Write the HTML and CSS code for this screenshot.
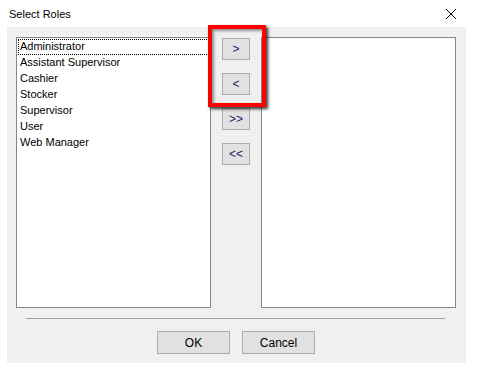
FILE: index.html
```html
<!DOCTYPE html>
<html lang="en">
<head>
    <meta charset="UTF-8">
    <title>Select Roles</title>
    <link rel="stylesheet" href="styles.css">
</head>
<body>
    <div class="window">
        <!-- Title bar -->
        <div class="titlebar">
            <span class="title">Select Roles</span>
            <svg class="close" width="12" height="12" viewBox="0 0 12 12">
                <path d="M1 1 L11 11 M11 1 L1 11" stroke="#000" stroke-width="1" fill="none"/>
            </svg>
        </div>

        <!-- Client area -->
        <div class="client">
            <div class="lists">
                <ul class="listbox">
                    <li class="focused">Administrator</li>
                    <li>Assistant Supervisor</li>
                    <li>Cashier</li>
                    <li>Stocker</li>
                    <li>Supervisor</li>
                    <li>User</li>
                    <li>Web Manager</li>
                </ul>
                <div class="movers">
                    <button class="btn small">&gt;</button>
                    <button class="btn small">&lt;</button>
                    <button class="btn small">&gt;&gt;</button>
                    <button class="btn small">&lt;&lt;</button>
                </div>
                <ul class="listbox"></ul>
            </div>
            <div class="separator"></div>
            <div class="actions">
                <button class="btn wide">OK</button>
                <button class="btn wide">Cancel</button>
            </div>
        </div>

        <!-- Highlight annotation -->
        <div class="highlight"></div>
    </div>
</body>
</html>
```

FILE: styles.css
```css
body {
    margin: 0;
    background-color: #FFFFFF;
    font-family: "Liberation Sans", Arial, sans-serif;
    font-size: 11px;
    color: #000000;
}

.window {
    position: relative;
    width: 477px;
    height: 370px;
}

.titlebar {
    height: 27px;
    display: flex;
    align-items: center;
    justify-content: space-between;
    padding: 0 20px 0 9px;
}

.title {
    font-size: 11px;
}

.close {
    display: block;
}

.client {
    background-color: #F0F0F0;
    margin-right: 11px;
    margin-left: 7px;
    height: 336px;
    padding: 10px 10px 0 9px;
    box-sizing: border-box;
}

.lists {
    display: flex;
}

.listbox {
    list-style: none;
    margin: 0;
    padding: 1px;
    width: 195px;
    height: 271px;
    box-sizing: border-box;
    border: 1px solid #828790;
    background-color: #FFFFFF;
}

.listbox li {
    height: 16px;
    line-height: 15px;
    padding-left: 2px;
    white-space: nowrap;
}

.listbox li.focused {
    outline: 1px dotted #000000;
    outline-offset: -1px;
}

.movers {
    width: 50px;
    display: flex;
    flex-direction: column;
    align-items: center;
    gap: 13px;
    padding-top: 1px;
}

.btn {
    font-family: "Liberation Sans", Arial, sans-serif;
    font-size: 11px;
    color: #000000;
    background-color: #E1E1E1;
    border: 1px solid #ADADAD;
    padding: 0;
    box-sizing: border-box;
}

.btn.small {
    width: 28px;
    height: 22px;
    font-size: 12px;
    color: #1A1A6A;
}

.btn.wide {
    width: 73px;
    height: 23px;
    font-size: 12px;
}

.separator {
    height: 1px;
    background-color: #A0A0A0;
    margin: 10px 11px 0 10px;
}

.actions {
    display: flex;
    justify-content: center;
    gap: 12px;
    margin-top: 12px;
}

/* Red annotation box */
.highlight {
    position: absolute;
    left: 208px;
    top: 25px;
    width: 58px;
    height: 82px;
    box-sizing: border-box;
    border: 4px solid #FF0000;
    box-shadow: 2px 2px 3px rgba(0, 0, 0, 0.8), inset 2px 2px 3px rgba(0, 0, 0, 0.4);
}
```
